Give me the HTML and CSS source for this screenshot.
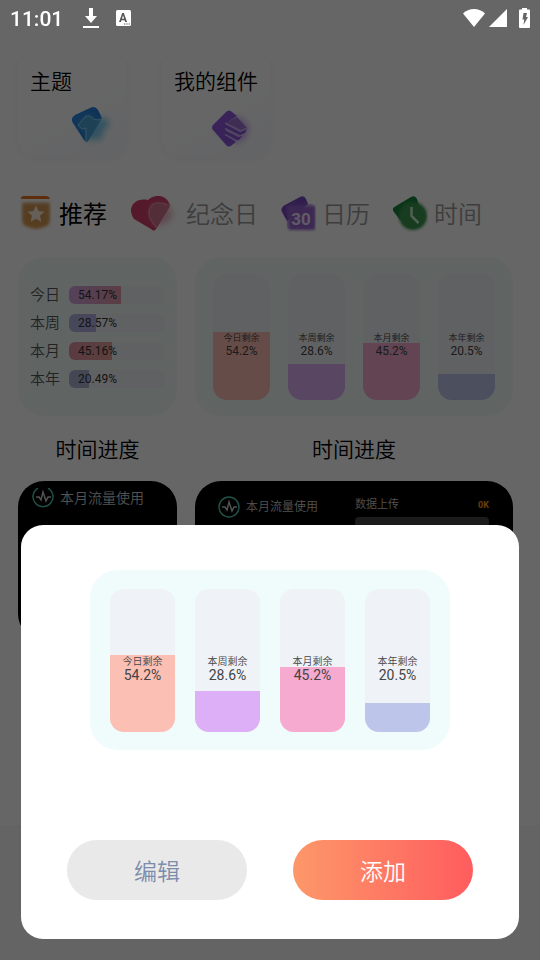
FILE: index.html
```html
<!DOCTYPE html>
<html lang="zh-CN">
<head>
<meta charset="utf-8">
<meta name="viewport" content="width=device-width, initial-scale=1">
<title>组件</title>
<link rel="stylesheet" href="styles.css">
</head>
<body>
<header class="status">
  <div class="status-group">
    <time class="clock">11:01</time>
    <svg class="download" width="16" height="20" viewBox="0 0 16 20" fill="#fff"><path d="M6 0h4v8h4l-6 7-6-7h4zM0 18h16v2H0z"/></svg>
    <svg width="15" height="16" viewBox="0 0 15 16"><rect width="15" height="16" rx="1.500" fill="#fff"/><text class="glyph-a" x="7" y="12" text-anchor="middle" fill="#555">A</text><path d="M8 14h1.300m1 0h1.300m1 0h1.300" stroke="#555" stroke-width="1.200"/></svg>
  </div>
  <div class="status-group signals">
    <svg width="22" height="18" viewBox="0 0 22 18" fill="#fff"><path d="M0 4.500Q4.500 0 11 0t11 4.500L11 18z"/></svg>
    <svg width="18" height="18" viewBox="0 0 18 18" fill="#fff"><path d="M18 0v18H0z"/></svg>
    <svg class="battery" width="11" height="20" viewBox="0 0 11 20"><path d="M3 0h5v1.500h2q1 0 1 1V19q0 1-1 1H1q-1 0-1-1V2.500q0-1 1-1h2z" fill="#fff"/><path d="M4.500 5H8L7 9h2l-4.500 8 .7-5.500H3.500z" fill="#666"/></svg>
  </div>
</header>

<main class="page">
  <nav class="shortcuts">
    <a class="shortcut" href="#theme">
      <span>主题</span>
      <svg class="theme-icon" width="52" height="48" viewBox="0 0 52 48">
        <defs>
          <filter id="soft" x="-40%" y="-40%" width="180%" height="180%"><feGaussianBlur stdDeviation="3"/></filter>
          <filter id="softer" x="-20%" y="-20%" width="140%" height="140%"><feGaussianBlur stdDeviation="1.500"/></filter>
          <linearGradient id="blue" x2="1" y2="1"><stop stop-color="#2f8fe6"/><stop offset="1" stop-color="#1a6cc4"/></linearGradient>
          <clipPath id="theme-back"><path d="M14 39L3 22q-3-5 2-8l15-7q5-3 8 2l4 8-14 23q-2 2-4-1z"/></clipPath>
        </defs>
        <path d="M14 39L3 22q-3-5 2-8l15-7q5-3 8 2l4 8-14 23q-2 2-4-1z" fill="url(#blue)"/>
        <path d="M8 24l8-9h4q4 5 9 4l8-3 2 8-5 5-3 10H16V27l-4 1z" fill="#55bdf0" opacity=".75" filter="url(#soft)"/>
        <g clip-path="url(#theme-back)"><path d="M8 24l8-9h4q4 5 9 4l8-3 2 8-5 5-3 14H16V27l-4 1z" fill="#4aa5d8" stroke="#8fd4f8"/></g>
      </svg>
    </a>
    <a class="shortcut" href="#mine">
      <span>我的组件</span>
      <svg class="mine-icon" width="44" height="42" viewBox="0 0 44 42">
        <path d="M15 17l12-8 10 10-3 12-11 6z" fill="#b98af0" opacity=".7" filter="url(#soft)"/>
        <path d="M1 18L14 5q3-3 6 0l5 4-11 7v12l10 7-4 3q-3 3-6 0L1 23q-2-2 0-5z" fill="#8f58dc"/>
        <path d="M13 16l12-6 10 11-6 3z" fill="#a070d0"/>
        <path d="M13 17l15 8 7-3-2 4-5 2-15-7zM13 23l13 7 4-1-3 4h-3l-11-6zM13 29l9 5-4 3-5-3z" fill="#8a55d6"/>
        <path d="M13 16l16 8 6-3M13 21.500l15 8M13 27.500l11 6" fill="none" stroke="#c9a6f5" stroke-width="1.500"/>
      </svg>
    </a>
  </nav>

  <nav class="tabs">
    <button class="tab active"><svg width="32" height="36" viewBox="0 0 32 36"><path d="M3 8h26v20q-2 3-13 5Q5 31 3 28z" fill="#d99a50" filter="url(#softer)"/><path d="M1 3V2q0-2 3-2h22q3 0 4 3z" fill="#e9701e"/><path d="M2 6h28v20H2z" fill="#d39a58" opacity=".6" filter="url(#softer)"/><path d="M16 9.500l2.500 5.600 6 .6-4.500 4.100 1.300 6-5.300-3.100-5.300 3.100 1.300-6-4.500-4.100 6-.6z" fill="#ffeedd"/></svg><span>推荐</span></button>
    <button class="tab"><svg class="heart" width="48" height="36" viewBox="0 0 48 36"><defs><clipPath id="heart-back"><path d="M18 4C25-3 38-1 40 10L26 33q-2 3-5 0L4 23C-4 12 5 1 18 4z"/></clipPath></defs><path d="M18 4C25-3 38-1 40 10L26 33q-2 3-5 0L4 23C-4 12 5 1 18 4z" fill="#d2406a"/><path d="M25 29C15 17 20 6 30 7q6 2 10 4l3 9-7 8z" fill="#e08aa4" opacity=".6" filter="url(#soft)"/><path clip-path="url(#heart-back)" d="M26 31C14 18 19 6 30 7q5 0 12 4v20z" fill="#d0708c" stroke="#e28ca4" stroke-width="1.500"/></svg><span>纪念日</span></button>
    <button class="tab"><svg width="35" height="36" viewBox="0 0 35 36"><path d="M1 16Q-1 12 4 9L19 1q4-2 6 2l2 5L6 25z" fill="#7846c1"/><path d="M6 10h28v24H8z" fill="#9a6acd" filter="url(#softer)"/><path d="M6 12q0-3 4-4l3-3q2 0 2 2h7l2-2 3 3h3q4 1 4 4v17q0 4-4 4H9q-3 0-3-3z" fill="#9060cc" opacity=".4"/><text class="glyph-30" x="20" y="29" text-anchor="middle" fill="#efe4ff">30</text></svg><span>日历</span></button>
    <button class="tab"><svg width="35" height="36" viewBox="0 0 35 36"><path d="M1 16q-3-4 2-6L18 1q4-2 6 2l2 6L7 24z" fill="#15843a"/><circle cx="20" cy="20" r="14" fill="#3a9c50" filter="url(#softer)"/><circle cx="20" cy="20" r="13" fill="#3a9450" opacity=".6"/><path d="M18.500 11v9l7 7" fill="none" stroke="#c9efd2" stroke-width="2.500"/></svg><span>时间</span></button>
  </nav>

  <section class="widgets">
    <article class="widget">
      <div class="card rows">
        <div class="row"><span>今日</span><div class="track"><i class="today" style="width:54.17%"></i><b>54.17%</b></div></div>
        <div class="row"><span>本周</span><div class="track"><i class="week" style="width:28.57%"></i><b>28.57%</b></div></div>
        <div class="row"><span>本月</span><div class="track"><i class="month" style="width:45.16%"></i><b>45.16%</b></div></div>
        <div class="row"><span>本年</span><div class="track"><i class="year" style="width:20.49%"></i><b>20.49%</b></div></div>
      </div>
      <h2>时间进度</h2>
    </article>
    <article class="widget">
      <div class="card columns">
        <div class="column"><i class="peach" style="height:54.2%"></i><p>今日剩余<b>54.2%</b></p></div>
        <div class="column"><i class="violet" style="height:28.6%"></i><p>本周剩余<b>28.6%</b></p></div>
        <div class="column"><i class="pink" style="height:45.2%"></i><p>本月剩余<b>45.2%</b></p></div>
        <div class="column"><i class="indigo" style="height:20.5%"></i><p>本年剩余<b>20.5%</b></p></div>
      </div>
      <h2>时间进度</h2>
    </article>
    <article class="card dark">
      <div class="usage"><svg width="22" height="20" viewBox="0 0 22 20" fill="none"><path d="M6 0a10 10 0 1 0 10 0" stroke="#4fc9b2" stroke-width="1.500"/><path d="M4 9h3l2 3 2-8 3 9 2-4h3" stroke="#ccc" stroke-width="1.500"/></svg><span>本月流量使用</span></div>
    </article>
    <article class="card dark split">
      <div class="usage small"><svg width="22" height="22" viewBox="0 0 22 22" fill="none"><circle cx="11" cy="11" r="10" stroke="#4fc9b2" stroke-width="1.500"/><path d="M4 11h3l2 3 2-8 3 9 2-4h3" stroke="#ccc" stroke-width="1.500"/></svg><span>本月流量使用</span></div>
      <div class="upload"><div class="upload-head"><span>数据上传</span><b>0K</b></div><div class="upload-track"></div></div>
    </article>
  </section>
</main>
<div class="bottom-bar"></div>

<div class="scrim"></div>
<section class="dialog" role="dialog" aria-label="时间进度">
  <div class="card columns preview">
    <div class="column"><i class="peach" style="height:54.2%"></i><p>今日剩余<b>54.2%</b></p></div>
    <div class="column"><i class="violet" style="height:28.6%"></i><p>本周剩余<b>28.6%</b></p></div>
    <div class="column"><i class="pink" style="height:45.2%"></i><p>本月剩余<b>45.2%</b></p></div>
    <div class="column"><i class="indigo" style="height:20.5%"></i><p>本年剩余<b>20.5%</b></p></div>
  </div>
  <div class="actions">
    <button class="action edit">编辑</button>
    <button class="action add">添加</button>
  </div>
</section>
</body>
</html>
```
FILE: styles.css
```css
* { box-sizing: border-box; }

body {
  margin: 0;
  min-height: 100vh;
  display: flex;
  flex-direction: column;
  background: #fff;
  color: #000;
  font-family: Roboto, "Noto Sans CJK SC", sans-serif;
  font-weight: 350;
}

button { border: 0; padding: 0; background: none; font: inherit; cursor: pointer; }
a { color: inherit; text-decoration: none; }
h2, p { margin: 0; font-weight: inherit; }
b { font-weight: 400; }
svg { display: block; flex: none; }

/* Status bar stays bright above the scrim */
.status {
  position: relative;
  z-index: 2;
  display: flex;
  justify-content: space-between;
  height: 36px;
  padding: 0 10px;
  color: #fff;
}
.status-group { display: flex; align-items: center; gap: 17px; }
.signals { gap: 4px; padding-bottom: 1px; }
.clock { padding-top: 1px; font-size: 21px; font-weight: 500; line-height: 36px; }
.download { margin-left: 3px; }
.battery { margin-left: 8px; }
.glyph-a { font-size: 12px; font-weight: 700; }
.glyph-30 { font-size: 17px; font-weight: 700; }

.page { flex: 1; padding: 16px 18px 0; }

.shortcuts { display: flex; gap: 36px; }
.shortcut {
  display: flex;
  flex-direction: column;
  justify-content: space-between;
  width: 108px;
  height: 105px;
  padding: 14px 0 8px 12px;
  border-radius: 18px;
  background: linear-gradient(150deg, #fff 50%, #f6f9fd);
  box-shadow: 0 2px 8px rgba(60, 60, 80, .05);
  font-size: 21px;
  line-height: 32px;
  white-space: nowrap;
}
.theme-icon { align-self: flex-end; margin-right: 4px; }
.mine-icon { align-self: flex-end; margin-right: 14px; }

.tabs { display: flex; align-items: center; gap: 23px; height: 40px; margin: 37px 0 23px; padding-left: 2px; }
.tab { display: flex; align-items: center; gap: 6px; color: #999; font-size: 24px; line-height: 36px; white-space: nowrap; }
.tab span { padding-top: 2px; }
.tab.active { gap: 7px; color: #000; font-weight: 400; }
.heart { margin-right: 2px; }

.widgets {
  display: grid;
  grid-template-columns: 1fr 2fr;
  column-gap: 18px;
  padding-right: 9px;
}
.widget { min-width: 0; }
.widget h2 { padding: 19px 0 16px; font-size: 21px; line-height: 30px; text-align: center; }

.card { height: 159px; border-radius: 26px; background: #effcfb; }

.rows { display: flex; flex-direction: column; justify-content: center; gap: 10px; padding: 0 12px; }
.row { display: flex; align-items: center; gap: 9px; height: 18px; color: #555; font-size: 15px; line-height: 18px; }
.track { display: grid; flex: 1; overflow: hidden; border-radius: 6px; background: #f0f2f5; }
.track > * { grid-area: 1 / 1; }
.track b { padding-left: 9px; color: #333; font-size: 12px; }
.today { background: linear-gradient(90deg, #d3a3e4, #e39aa8); }
.week { background: linear-gradient(90deg, #adb6e2, #b3aee4); }
.month { background: linear-gradient(90deg, #e292a6, #e3a198); }
.year { background: #abb2d2; }

.columns { display: grid; grid-template-columns: repeat(4, 1fr); gap: 18px; padding: 17px 18px 16px; }
.column { display: grid; overflow: hidden; border-radius: 14px; background: #eff2f6; }
.column > * { grid-area: 1 / 1; }
.column i { align-self: end; }
.column p { align-self: center; padding-top: 14px; color: #444; font-size: 9px; line-height: 13px; text-align: center; }
.column b { display: block; font-size: 12px; line-height: 12px; }
.peach { background: #fcbfb4; }
.violet { background: #dcaff6; }
.pink { background: #f6aad0; }
.indigo { background: #bdc5eb; }

.dark { background: #000; color: #ccc; }
.usage { display: flex; align-items: center; gap: 6px; padding: 7px 0 0 14px; font-size: 14px; line-height: 20px; white-space: nowrap; }
.usage.small { padding: 0; font-size: 12px; line-height: 22px; }
.split { display: flex; align-items: flex-start; justify-content: space-between; padding: 15px 24px 0 23px; }
.upload { width: 134px; font-size: 11px; line-height: 18px; }
.upload-head { display: flex; justify-content: space-between; }
.upload-head b { color: #ff9e1f; font-size: 9px; font-weight: 700; }
.upload-track { height: 10px; margin-top: 3px; border-radius: 4px; background: #444; }

.bottom-bar { height: 134px; border-top: 1px solid #f5f5f5; background: #fafafa; }

.scrim { position: fixed; inset: 0; z-index: 1; background: rgba(0, 0, 0, .6); }

.dialog {
  position: fixed;
  z-index: 3;
  right: 21px;
  bottom: 21px;
  left: 21px;
  padding: 45px 46px 39px;
  border-radius: 22px;
  background: #fff;
}
.preview { max-width: 360px; height: 180px; margin: 0 auto 90px; gap: 20px; padding: 19px 20px 18px; border-radius: 28px; }
.preview p { padding-top: 15px; font-size: 10px; line-height: 14px; }
.preview b { font-size: 14px; line-height: 13px; }

.actions { display: grid; grid-template-columns: 1fr 1fr; gap: 46px; }
.action { height: 60px; border-radius: 30px; font-size: 23px; }
.edit { background: #e9e9e9; color: #7c8cab; }
.add { background: linear-gradient(90deg, #fd9869, #ff5c5e); color: #fff; }
```
